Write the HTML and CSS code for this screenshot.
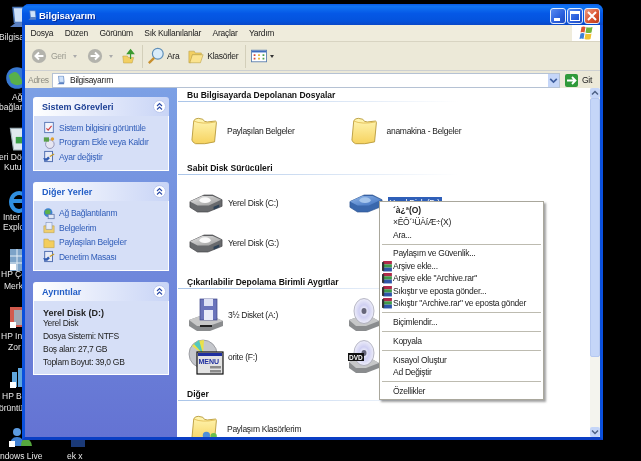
FILE: index.html
```html
<!DOCTYPE html>
<html lang="tr">
<head>
<meta charset="utf-8">
<title>Bilgisayarım</title>
<link rel="stylesheet" href="styles.css">
</head>
<body>
<svg class="defs" width="0" height="0">
  <defs>
    <linearGradient id="fold" x1="0" y1="0" x2="0" y2="1"><stop offset="0" stop-color="#fff6b4"/><stop offset="1" stop-color="#f6d25e"/></linearGradient>
    <linearGradient id="blue" x1="0" y1="0" x2="1" y2="1"><stop offset="0" stop-color="#8fb4e6"/><stop offset="1" stop-color="#3f72c0"/></linearGradient>
    <linearGradient id="gry" x1="0" y1="0" x2="1" y2="1"><stop offset="0" stop-color="#e4e4e4"/><stop offset="1" stop-color="#9a9a9a"/></linearGradient>
    <radialGradient id="cd"><stop offset="0" stop-color="#fff"/><stop offset=".5" stop-color="#cfcff2"/><stop offset="1" stop-color="#eeeefa"/></radialGradient>
    <symbol id="folder" viewBox="0 0 32 32"><path d="M3 5q1-3 5-3l5 1q1 3 5 3l9-1q1 0 1 2l-2 21q-11 3-21 2-3-1-4-4z" fill="url(#fold)" stroke="#b89a3c"/><path d="M3 5q9 4 24 1" fill="none" stroke="#e2be56" stroke-width="1"/></symbol>
    <symbol id="disk" viewBox="0 0 36 20"><path d="M1 8 16 1h9l10 5v7L20 19H9L1 14z" fill="#686a6d" stroke="#414144" stroke-width=".7"/><path d="M1 8 14 2h11l9 4-13 6H9z" fill="url(#gry)"/><ellipse cx="17" cy="6.500" rx="6" ry="3" fill="#fafafa"/><path d="M26 13.500l6-2.500v3l-6 2.500z" fill="#2f4358"/></symbol>
    <symbol id="diskb" viewBox="0 0 36 20"><path d="M1 8 16 1h9l10 5v7L20 19H9L1 14z" fill="#3a68ad" stroke="#2e538e" stroke-width=".7"/><path d="M1 8 14 2h11l9 4-13 6H9z" fill="url(#blue)"/><ellipse cx="17" cy="6.500" rx="6" ry="3" fill="#a5c5ec"/></symbol>
    <symbol id="cdrom" viewBox="0 0 32 34"><path d="M1 22 12 18h10l9 5v5l-13 5H8l-7-5z" fill="#8a8c8e"/><path d="M1 22 12 18h10l9 5-13 5H8z" fill="#c6c7c8"/><ellipse cx="16" cy="13" rx="10" ry="12.500" fill="url(#cd)" stroke="#9c9cae" stroke-width=".7"/><ellipse cx="16" cy="13" rx="2.500" ry="3" fill="#65657a"/></symbol>
    <symbol id="rar" viewBox="0 0 10 10"><rect x="1" y="0" width="8" height="3" fill="#b02a4a"/><rect x="1" y="3" width="8" height="3" fill="#3f9b4a"/><rect x="1" y="6" width="8" height="3.500" fill="#2e55a8"/><rect x="0" y="1" width="2" height="8" fill="#333"/></symbol>
    <symbol id="chev" viewBox="0 0 13 13"><circle cx="6.500" cy="6.500" r="6" fill="#fff" stroke="#b9c6ee"/><path d="M4 6l2.500-2.500L9 6M4 9.500l2.500-2.500L9 9.500" fill="none" stroke="#2b4aa8" stroke-width="1.100"/></symbol>
    <symbol id="cp" viewBox="0 0 14 14"><rect x="2" y="1" width="9" height="12" fill="#e7ebf7" stroke="#3d5fa8"/><path d="M0 9h4l2-2 2 2-3 3H2z" fill="#315bb0"/><path d="M8 7l5-3" stroke="#c89c26" stroke-width="1.500"/></symbol>
    <symbol id="mono" viewBox="0 0 16 16"><path d="M4 1h8l1 10H5z" fill="#cfe2fa" stroke="#4d78b8"/><path d="M2 14l4-3h7v3z" fill="#5a80c2"/></symbol>
  </defs>
</svg>

<div class="desktop">
  <svg class="dglyph pos-a" viewBox="0 0 20 20"><use href="#mono"/></svg>
  <span class="dlabel l1">Bilgisay</span>
  <svg class="dglyph pos-b" viewBox="0 0 20 20"><circle cx="10" cy="10" r="9" fill="#3878d0"/><path d="M3 8q6-6 9 0t4 6q-6 4-11 0z" fill="#58b04a"/></svg>
  <span class="dlabel l2">Ağ</span><span class="dlabel l3">bağlant</span>
  <svg class="dglyph pos-c" viewBox="0 0 20 24"><path d="M2 3h16l-2 20H5z" fill="#dfe9ee" stroke="#9fb0b8"/><path d="M7 11h7v6H7z" fill="#3b9f46"/></svg>
  <span class="dlabel l4">eri Dör</span><span class="dlabel l5">Kutu</span>
  <svg class="dglyph pos-d" viewBox="0 0 24 28"><path d="M5 14h15a8 9 0 1 0-3 8" fill="none" stroke="#2f8fe0" stroke-width="4"/></svg>
  <span class="dlabel l6">Inter</span><span class="dlabel l7">Explo</span>
  <svg class="dglyph pos-e" viewBox="0 0 20 24"><rect x="1" y="1" width="18" height="22" fill="#7da3c8"/><path d="M1 8h18M1 15h18M8 1v22" stroke="#e5eef6"/><rect x="1" y="16" width="6" height="6" fill="#fff"/></svg>
  <span class="dlabel l8">HP Çö</span><span class="dlabel l9">Merk</span>
  <svg class="dglyph pos-f" viewBox="0 0 20 24"><rect x="1" y="1" width="18" height="20" fill="#d25a4d"/><rect x="5" y="4" width="14" height="15" fill="#9fa8b4"/><rect x="1" y="16" width="6" height="6" fill="#fff"/></svg>
  <span class="dlabel l10">HP In</span><span class="dlabel l11">Zor</span>
  <svg class="dglyph pos-g" viewBox="0 0 20 24"><path d="M3 6h5v15H3zM9 2h6v19H9z" fill="#5ea6dd"/><rect x="1" y="16" width="6" height="6" fill="#fff"/></svg>
  <span class="dlabel l12">HP Be</span><span class="dlabel l13">örüntü</span>
  <svg class="dglyph pos-h" viewBox="0 0 26 20"><circle cx="9" cy="5" r="4" fill="#5c9be0"/><path d="M2 19q0-9 7-9t7 9z" fill="#3f7fd0"/><circle cx="18" cy="7" r="3.500" fill="#6cc04c"/><path d="M13 19q0-7 5-7t6 7z" fill="#56a83e"/><rect x="1" y="14" width="6" height="6" fill="#fff"/></svg>
  <span class="dlabel l14">Windows Live</span>
  <div class="dstub"></div>
  <span class="dlabel l15">ek x</span>

  <div class="window">
    <div class="titlebar">
      <svg class="ticon" viewBox="0 0 16 16"><use href="#mono"/></svg>
      <span class="ttext">Bilgisayarım</span>
      <span class="wbtn"><i class="g-min"></i></span>
      <span class="wbtn"><i class="g-max"></i></span>
      <span class="wbtn close"><svg viewBox="0 0 14 14" class="xglyph"><path d="M3 3l8 8M11 3l-8 8" stroke="#fff" stroke-width="2"/></svg></span>
    </div>
    <div class="menubar">
      <span>Dosya</span><span>Düzen</span><span>Görünüm</span><span>Sık Kullanılanlar</span><span>Araçlar</span><span>Yardım</span>
      <span class="logo"><svg viewBox="0 0 14 14" class="flag"><path d="M2 1q2-1 4 0L5 6.500q-2-1-4 0z" fill="#e0562f"/><path d="M7 1q2 1 6 0l-1 5.500q-3 1-6 0z" fill="#73b53a"/><path d="M1 7.500q2-1 4 0L4 13q-2-1-4 0z" fill="#3d7fd8"/><path d="M6 7.500q3 1 6 0L11 13q-3 1-6 0z" fill="#f0c232"/></svg></span>
    </div>
    <div class="toolbar">
      <svg class="navb" viewBox="0 0 18 18"><circle cx="9" cy="9" r="8" fill="#b3b3ac"/><path d="M14 9H6M9 5 5 9l4 4" fill="none" stroke="#fff" stroke-width="2.200"/></svg>
      <span class="tlabel dim">Geri</span><i class="caret dimc"></i>
      <svg class="navb fwd" viewBox="0 0 18 18"><circle cx="9" cy="9" r="8" fill="#b3b3ac"/><path d="M4 9h8M9 5l4 4-4 4" fill="none" stroke="#fff" stroke-width="2.200"/></svg>
      <i class="caret dimc dimc2"></i>
      <svg class="up" viewBox="0 0 18 18"><path d="M1 9h6l1 2h7l-2 7H2z" fill="#f2cf62" stroke="#b89a3c" stroke-width=".6"/><path d="M11 13V6M7 6l4-5 4 5z" fill="#3a9a2e" stroke="#3a9a2e" stroke-width="1.500"/></svg>
      <i class="tsep"></i>
      <svg class="srch" viewBox="0 0 20 20"><circle cx="12" cy="7.500" r="6" fill="#d9ecfa" stroke="#5f8fb8" stroke-width="1.300"/><path d="M8 12 2 18" stroke="#c88f2e" stroke-width="2.600"/></svg>
      <span class="tlabel tight">Ara</span>
      <svg class="fold" viewBox="0 0 18 16"><path d="M1 2h6l1 2h7v2H5L3 15H1z" fill="#f2cf62" stroke="#b89a3c" stroke-width=".6"/><path d="M5 6h12l-3 9H2z" fill="#fbe38e" stroke="#b89a3c" stroke-width=".6"/></svg>
      <span class="tlabel">Klasörler</span>
      <i class="tsep sep2"></i>
      <svg class="views" viewBox="0 0 18 14"><rect x=".5" y=".5" width="17" height="13" fill="#fff" stroke="#5a7fb0"/><rect x="1" y="1" width="16" height="2" fill="#3d6cc0"/><path d="M3 5h2v2H3zM3 9h2v2H3z" fill="#d84a3a"/><path d="M8 5h2v2H8zM8 9h2v2H8z" fill="#e8b030"/><path d="M13 5h2v2h-2zM13 9h2v2h-2z" fill="#4aa04a"/></svg>
      <i class="caret"></i>
    </div>
    <div class="addr">
      <span class="alabel">Adres</span>
      <div class="afield">
        <svg class="aicon" viewBox="0 0 16 16"><use href="#mono"/></svg>
        <span>Bilgisayarım</span>
        <span class="acombo"><svg viewBox="0 0 10 10"><path d="M2 3.500 5 6.500 8 3.500" fill="none" stroke="#3f5f9f" stroke-width="1.500"/></svg></span>
      </div>
      <svg class="go" viewBox="0 0 13 13"><rect width="13" height="13" rx="2" fill="#2f9a3a"/><path d="M2 6.500h8M7 3l3.500 3.500L7 10" fill="none" stroke="#fff" stroke-width="1.800"/></svg>
      <span class="golabel">Git</span>
    </div>
    <div class="content">
      <aside class="side">
        <section class="panel">
          <header class="phead primary"><span>Sistem Görevleri</span><svg class="chev"><use href="#chev"/></svg></header>
          <ul class="pbody">
            <li><svg class="pi" viewBox="0 0 14 14"><rect x="2" y="1" width="10" height="12" fill="#f2f4fc" stroke="#4b6cb0"/><path d="M4 8l2 2 4-5" fill="none" stroke="#d23c3c" stroke-width="1.300"/></svg>Sistem bilgisini görüntüle</li>
            <li><svg class="pi" viewBox="0 0 14 14"><circle cx="8" cy="9" r="5" fill="#e6e6f2" stroke="#8b8bb0"/><rect x="1" y="1" width="6" height="5" fill="#5aa04a"/><circle cx="11" cy="3" r="2" fill="#e0a030"/></svg>Program Ekle veya Kaldır</li>
            <li><svg class="pi"><use href="#cp"/></svg>Ayar değiştir</li>
          </ul>
        </section>
        <section class="panel">
          <header class="phead"><span>Diğer Yerler</span><svg class="chev"><use href="#chev"/></svg></header>
          <ul class="pbody">
            <li><svg class="pi" viewBox="0 0 14 14"><circle cx="6" cy="6" r="5" fill="#3f82d0"/><path d="M2 4q4-3 7 0l-1 4H3z" fill="#5cb04a"/><rect x="6" y="8" width="7" height="5" fill="#dfe6f6" stroke="#6a7fb0"/></svg>Ağ Bağlantılarım</li>
            <li><svg class="pi" viewBox="0 0 14 14"><path d="M1 5h12v8H1z" fill="#f0cf70" stroke="#b89a3c" stroke-width=".6"/><rect x="3.500" y="1" width="7" height="8" fill="#e6ecfa" stroke="#7186b4" stroke-width=".6"/></svg>Belgelerim</li>
            <li><svg class="pi" viewBox="0 0 14 14"><path d="M1 3h5l1 2h6v8H1z" fill="#f3cd5d" stroke="#b89a3c" stroke-width=".6"/></svg>Paylaşılan Belgeler</li>
            <li><svg class="pi"><use href="#cp"/></svg>Denetim Masası</li>
          </ul>
        </section>
        <section class="panel">
          <header class="phead"><span>Ayrıntılar</span><svg class="chev"><use href="#chev"/></svg></header>
          <div class="pdetail">
            <strong>Yerel Disk (D:)</strong>
            <span>Yerel Disk</span>
            <span class="gap">Dosya Sistemi: NTFS</span>
            <span class="gap">Boş alan: 27,7 GB</span>
            <span class="gap">Toplam Boyut: 39,0 GB</span>
          </div>
        </section>
      </aside>
      <main class="main">
        <h2 class="shead">Bu Bilgisayarda Depolanan Dosyalar</h2>
        <div class="tiles t1">
          <div class="tile"><svg class="ic32"><use href="#folder"/></svg><span>Paylaşılan Belgeler</span></div>
          <div class="tile"><svg class="ic32"><use href="#folder"/></svg><span>anamakina - Belgeler</span></div>
        </div>
        <h2 class="shead">Sabit Disk Sürücüleri</h2>
        <div class="tiles t2">
          <div class="tile"><svg class="icdisk"><use href="#disk"/></svg><span>Yerel Disk (C:)</span></div>
          <div class="tile"><svg class="icdisk"><use href="#diskb"/></svg><span class="selected">Yerel Disk (D:)</span></div>
          <div class="tile"><svg class="icdisk"><use href="#disk"/></svg><span>Yerel Disk (G:)</span></div>
        </div>
        <h2 class="shead">Çıkarılabilir Depolama Birimli Aygıtlar</h2>
        <div class="tiles t3">
          <div class="tile"><svg class="ic36" viewBox="0 0 36 34"><path d="M1 22 12 18h12l11 5v5l-13 5H9l-8-5z" fill="#8a8c8e"/><path d="M1 22 12 18h12l11 5-14 5H9z" fill="#c8c8c8"/><rect x="12" y="1" width="17" height="21" fill="#6b74bb" stroke="#3d4488" stroke-width=".7"/><rect x="16" y="1" width="9" height="7" fill="#dfe2f5"/><rect x="16" y="12" width="9" height="10" fill="#e8eaf8"/><rect x="12" y="27" width="12" height="2" fill="#222"/></svg><span>3½ Disket (A:)</span></div>
          <div class="tile"><svg class="ic36 cdic"><use href="#cdrom"/></svg><span></span></div>
          <div class="tile"><svg class="ic36" viewBox="0 0 36 36"><circle cx="15" cy="15" r="14" fill="#c5c7cc" stroke="#85878c" stroke-width=".7"/><path d="M15 15 4 7q5-6 12-6z" fill="#e9e14a"/><path d="M15 15 6 5l5-4z" fill="#53c7c0"/><rect x="9" y="13" width="26" height="22" fill="#e3e3e3" stroke="#111" stroke-width="1.200"/><rect x="10" y="14" width="24" height="3" fill="#1f2f9f"/><text x="10.500" y="24.500" class="menuglyph">MENU</text><rect x="22" y="27" width="11" height="2.500" fill="#8b8b8b"/><rect x="22" y="31" width="11" height="2.500" fill="#8b8b8b"/></svg><span>orite (F:)</span></div>
          <div class="tile"><svg class="ic36 cdic" viewBox="0 0 32 34"><use href="#cdrom" width="32" height="34"/><rect x="0" y="13" width="16" height="8" fill="#111"/><text x="1" y="19.500" class="dvd">DVD</text></svg><span></span></div>
        </div>
        <h2 class="shead">Diğer</h2>
        <div class="tiles t4">
          <div class="tile"><svg class="ic32 share" viewBox="0 0 32 32"><use href="#folder" width="32" height="32"/><circle cx="17" cy="23" r="4" fill="#4f8fd8"/><path d="M11 32q0-6 6-6t6 6z" fill="#3f7fc8"/><circle cx="25" cy="24" r="3.500" fill="#6cc04c"/><path d="M20 32q0-5 5-5t5 5z" fill="#56a83e"/></svg><span>Paylaşım Klasörlerim</span></div>
        </div>
      </main>
      <div class="scroll">
        <span class="sbtn"><svg viewBox="0 0 10 10"><path d="M2 6.500 5 3.500 8 6.500" fill="none" stroke="#4d6185" stroke-width="1.500"/></svg></span>
        <span class="sthumb"></span>
        <span class="strack"></span>
        <span class="sbtn"><svg viewBox="0 0 10 10"><path d="M2 3.500 5 6.500 8 3.500" fill="none" stroke="#4d6185" stroke-width="1.500"/></svg></span>
      </div>
    </div>
  </div>

  <div class="ctx">
    <div class="mi bold">´à¿ª(O)</div>
    <div class="mi">×ÊÔ´¹ÜÀíÆ÷(X)</div>
    <div class="mi">Ara...</div>
    <div class="ms"></div>
    <div class="mi">Paylaşım ve Güvenlik...</div>
    <div class="mi"><svg class="rar"><use href="#rar"/></svg>Arşive ekle...</div>
    <div class="mi"><svg class="rar"><use href="#rar"/></svg>Arşive ekle "Archive.rar"</div>
    <div class="mi"><svg class="rar"><use href="#rar"/></svg>Sıkıştır ve eposta gönder...</div>
    <div class="mi"><svg class="rar"><use href="#rar"/></svg>Sıkıştır "Archive.rar" ve eposta gönder</div>
    <div class="ms"></div>
    <div class="mi">Biçimlendir...</div>
    <div class="ms"></div>
    <div class="mi">Kopyala</div>
    <div class="ms"></div>
    <div class="mi">Kısayol Oluştur</div>
    <div class="mi">Ad Değiştir</div>
    <div class="ms"></div>
    <div class="mi">Özellikler</div>
  </div>
</div>
</body>
</html>
```
FILE: styles.css
```css
* { box-sizing: border-box; }
html, body { margin: 0; padding: 0; background: #000; }
body { font-family: "Liberation Sans", Arial, sans-serif; font-size: 8.500px; letter-spacing: -.28px; color: #222; }
.defs { position: absolute; }
.desktop { position: relative; width: 641px; height: 461px; overflow: hidden; background: #000; filter: blur(.35px); }

/* desktop icons: free canvas */
.dglyph { position: absolute; width: 24px; height: 24px; }
.pos-a { left: 7px; top: 6px; }
.pos-b { left: 5px; top: 66px; }
.pos-c { left: 7px; top: 125px; height: 26px; }
.pos-d { left: 7px; top: 187px; height: 28px; }
.pos-e { left: 7px; top: 248px; }
.pos-f { left: 7px; top: 306px; }
.pos-g { left: 7px; top: 366px; }
.pos-h { left: 8px; top: 427px; width: 26px; height: 20px; }
.dlabel { position: absolute; color: #e8e8e8; font-size: 8.500px; letter-spacing: 0; line-height: 10px; white-space: nowrap; }
.l1 { left: -1px; top: 32px; }
.l2 { left: 12px; top: 92px; }
.l3 { left: -1px; top: 102px; }
.l4 { left: -1px; top: 152px; }
.l5 { left: 4px; top: 162px; }
.l6 { left: 3px; top: 212px; }
.l7 { left: 3px; top: 222px; }
.l8 { left: 1px; top: 269px; }
.l9 { left: 4px; top: 281px; }
.l10 { left: 1px; top: 331px; }
.l11 { left: 8px; top: 342px; }
.l12 { left: 2px; top: 391px; }
.l13 { left: -1px; top: 403px; }
.l14 { left: -10px; top: 451px; }
.l15 { left: 67px; top: 451px; }
.dstub { position: absolute; left: 71px; top: 438px; width: 14px; height: 9px; background: #1b3a78; }

/* window */
.window {
  position: absolute; left: 22px; top: 4px; width: 581px; height: 436px;
  display: flex; flex-direction: column;
  background: #0c4fd8;
  border: 3px solid #0a50dd; border-top: 0; border-bottom-color: #0a3ec4;
  border-radius: 7px 7px 0 0;
}
.titlebar {
  height: 21px; margin: 0 -3px; padding: 2px 3px 0 5px;
  display: flex; align-items: center; gap: 1px;
  background: linear-gradient(#0a5be6 0, #1074f3 12%, #0558e6 45%, #0453dd 80%, #0a48c8 100%);
  border-radius: 7px 7px 0 0;
}
.ticon { width: 11px; height: 13px; }
.ttext { flex: 1; color: #fff; font-size: 9.500px; letter-spacing: 0; font-weight: bold; text-shadow: 1px 1px 0 #0a2f9c; }
.wbtn {
  width: 16px; height: 16px; position: relative;
  border: 1px solid #e4ecfb; border-radius: 3px;
  background: linear-gradient(135deg, #5a8cf0, #2a5fdd 60%, #1d49bd);
}
.close { background: linear-gradient(135deg, #ee9a80, #d9532f 60%, #b93a1a); }
.xglyph { position: absolute; inset: 0; width: 14px; height: 14px; }
.g-min { position: absolute; left: 3px; bottom: 2px; width: 6px; height: 3px; background: #fff; }
.g-max { position: absolute; inset: 2px; border: 1px solid #fff; border-top-width: 3px; }

.menubar {
  height: 17px; display: flex; align-items: center; gap: 11.500px; padding-left: 5.500px;
  background: #efecdc; border-bottom: 1px solid #d8d4c2;
}
.logo { margin-left: auto; width: 28px; height: 16px; background: #fff; display: flex; align-items: center; justify-content: center; }
.flag { width: 15px; height: 14px; }

.toolbar {
  height: 29px; display: flex; align-items: center; padding-left: 6px;
  background: #ece9d8; border-bottom: 1px solid #cdd0d2;
}
.navb { width: 16px; height: 16px; }
.tlabel { margin-left: 3px; }
.tight { margin-left: 2px; }
.dim { margin-left: 4px; color: #9a9a90; }
.caret { width: 0; height: 0; border: 2.500px solid transparent; border-top: 3px solid #333; border-bottom: 0; margin-left: 3px; }
.dimc { border-top-color: #aaa; margin-left: 7px; }
.dimc2 { margin-left: 6px; }
.fwd { margin-left: 10px; }
.up { width: 14px; height: 16px; margin-left: 9px; }
.tsep { width: 1px; height: 23px; background: #d3cfba; margin-left: 6px; }
.srch { width: 18px; height: 18px; margin-left: 4px; }
.fold { width: 16px; height: 15px; margin-left: 9px; }
.sep2 { margin-left: 7px; }
.views { width: 16px; height: 14px; margin-left: 5px; }

.addr {
  height: 17px; display: flex; align-items: center;
  background: #ece9d8; padding: 1px 0 0 3px;
}
.alabel { width: 24px; color: #8b8b80; }
.afield {
  width: 508px; height: 15px; display: flex; align-items: center; gap: 4px; padding-left: 3px;
  background: #fff; border: 1px solid #b5c2d4;
}
.aicon { width: 10px; height: 13px; }
.acombo { margin-left: auto; width: 11px; height: 13px; background: #c5d6f8; display: block; }
.acombo svg { width: 11px; height: 13px; display: block; }
.go { width: 13px; height: 13px; margin-left: 5px; }
.golabel { margin-left: 4px; }

.content { flex: 1; min-height: 0; display: flex; background: #fff; }
.side {
  width: 152px; padding: 9px 8px 0; flex: none;
  display: flex; flex-direction: column; gap: 11.500px;
  background: linear-gradient(#7ca0e5, #6473d3);
}
.panel { width: 136px; }
.phead {
  height: 19px; display: flex; align-items: center; justify-content: space-between;
  padding: 0 3px 0 9px;
  background: linear-gradient(90deg, #fff, #c8d4f6);
  border-radius: 3px 3px 0 0;
  font-size: 9px; letter-spacing: 0; font-weight: bold; color: #215dc6;
}
.primary { color: #1c3f94; }
.chev { width: 13px; height: 13px; }
.pbody {
  margin: 0; padding: 4.500px 9px 5.500px; list-style: none;
  background: #d6dff7; border: 1px solid #fff; border-top: 0;
  color: #2f5cb8;
}
.pbody li { height: 14.600px; display: flex; align-items: center; gap: 4px; white-space: nowrap; }
.pi { width: 12px; height: 13px; flex: none; }
.pdetail {
  display: flex; flex-direction: column; padding: 6.500px 9px 7px; line-height: 10px;
  background: #d6dff7; border: 1px solid #fff; border-top: 0;
}
.pdetail strong { font-size: 9px; letter-spacing: 0; }
.gap { margin-top: 3px; }

.main { flex: 1; min-width: 0; overflow: hidden; padding-left: 1px; }
.shead {
  margin: 0; height: 14px; padding: 1px 0 0 9px;
  font-size: 8.500px; letter-spacing: 0; line-height: 12px; font-weight: bold; color: #111; white-space: nowrap;
  border-bottom: 1px solid; border-image: linear-gradient(90deg, #a9c4e8, #fff 70%) 1;
  width: 400px;
}
.tiles { display: grid; grid-template-columns: 159.500px 200px; padding-left: 9px; }
.t1 { padding-top: 9px; padding-bottom: 10px; }
.t2 { padding-top: 8px; padding-bottom: 12px; }
.t3 { padding-top: 6px; padding-bottom: 10px; row-gap: 2px; }
.t4 { padding-top: 8px; }
.tile { height: 40px; display: flex; align-items: center; gap: 4px; white-space: nowrap; }
.ic32 { width: 29px; height: 30px; margin-left: 4px; margin-right: 3px; flex: none; }
.icdisk { width: 34px; height: 19px; margin-left: 2px; margin-right: 1px; flex: none; }
.ic36 { width: 36px; height: 36px; margin-left: 1px; flex: none; }
.cdic { width: 32px; height: 34px; }
.selected { background: #2f5fb8; color: #fff; padding: 1px 2px; }

.scroll { width: 10px; flex: none; display: flex; flex-direction: column; background: #f4f4ee; margin-left: 1px; }
.sbtn { height: 10px; flex: none; background: #c5d6f8; border-radius: 2px; display: block; }
.sbtn svg { display: block; width: 10px; height: 10px; }
.sthumb { height: 259px; flex: none; background: #c5d6f8; border: 1px solid #b5c8f0; border-radius: 2px; }
.strack { flex: 1; }

/* context menu */
.ctx {
  position: absolute; left: 379px; top: 201px; width: 165px; height: 199px;
  padding: 1.750px 1px; background: #fff; border: 1px solid #a9a79c;
  box-shadow: 2px 2px 2px rgba(100,100,100,.6);
}
.mi { height: 12.500px; line-height: 12.500px; padding-left: 12px; position: relative; white-space: nowrap; }
.bold { font-weight: bold; letter-spacing: 0; }
.rar { position: absolute; left: 1px; top: 1px; width: 11px; height: 11px; }
.ms { height: 6.200px; position: relative; }
.ms::after { content: ""; position: absolute; left: 1px; right: 1px; top: 2.500px; height: 1px; background: #bdbbb0; }

/* glyphs inside drive icons */
.menuglyph { font: bold 7px "Liberation Sans", Arial, sans-serif; letter-spacing: 0; fill: #1f2fa0; }
.dvd { font: bold 6.500px "Liberation Sans", Arial, sans-serif; letter-spacing: 0; fill: #fff; }
```
